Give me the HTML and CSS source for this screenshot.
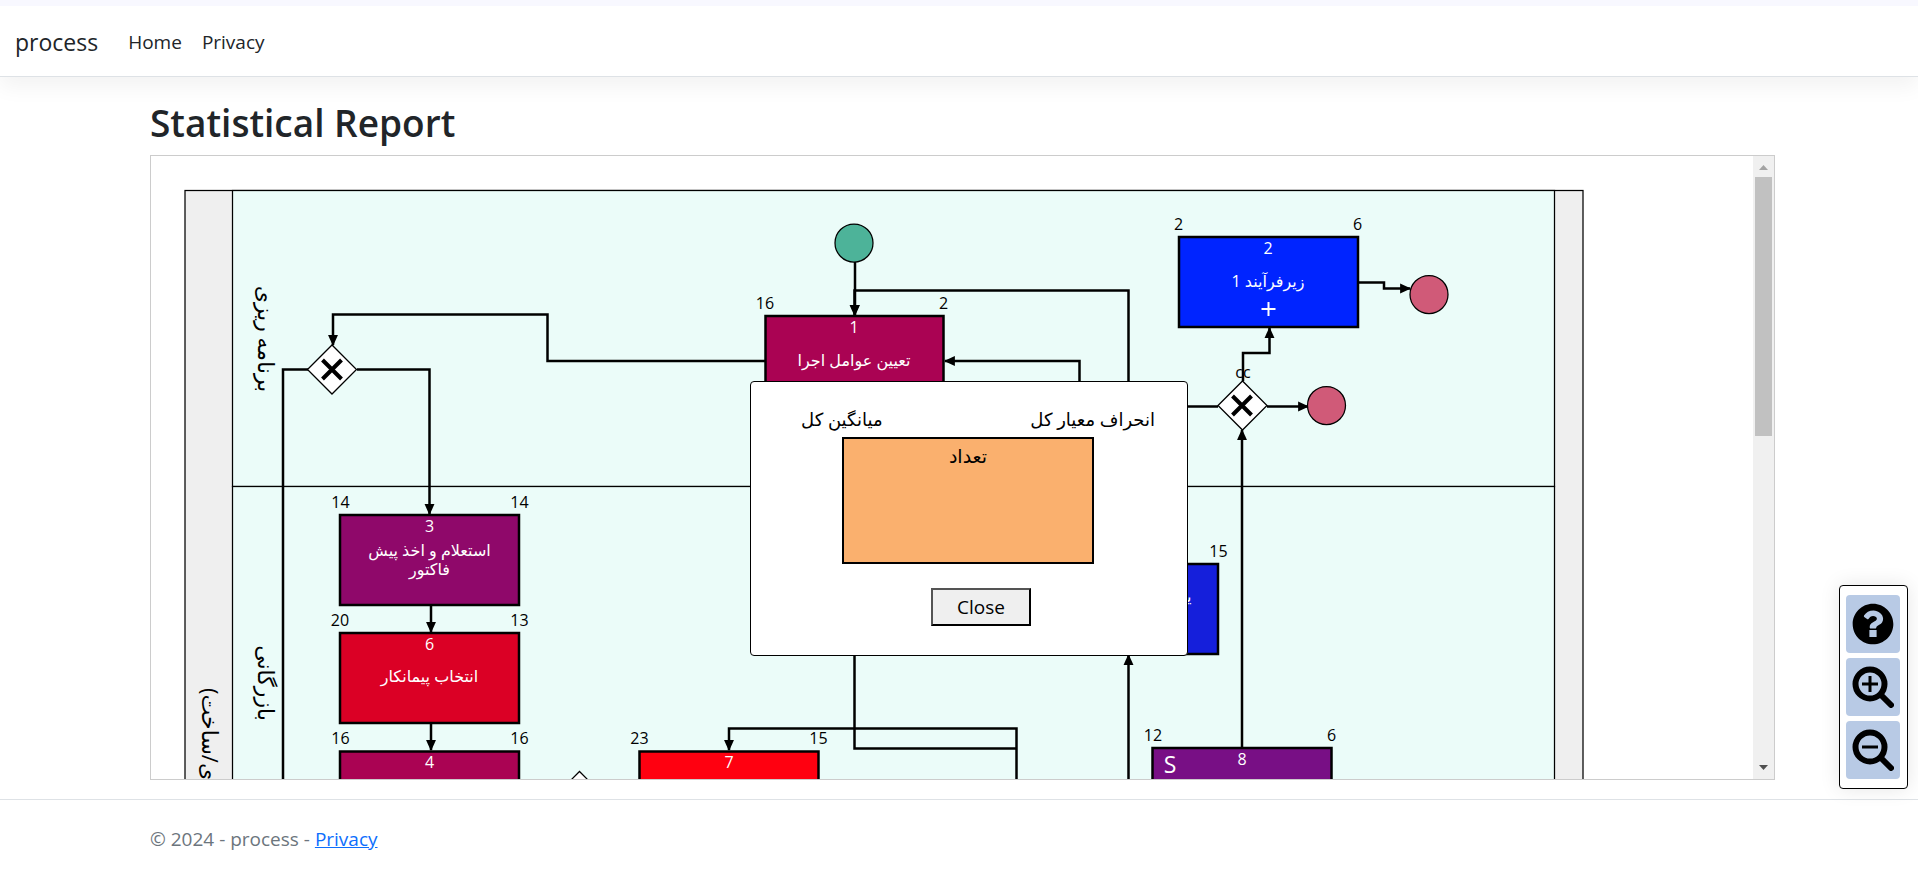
FILE: index.html
```html
<!DOCTYPE html>
<html lang="en">
<head>
<meta charset="utf-8">
<title>process</title>
<link rel="stylesheet" href="styles.css">
</head>
<body>
<header class="topbar">
  <nav class="nav">
    <a class="brand" href="#">process</a>
    <a class="nav-link" href="#">Home</a>
    <a class="nav-link" href="#">Privacy</a>
  </nav>
</header>

<main class="container">
  <h1 class="title">Statistical Report</h1>
  <section class="viewer">
    <svg class="diagram" viewBox="151 156 1602 623" preserveAspectRatio="xMinYMin slice" role="img" aria-label="Process diagram">
      <defs>
        <marker id="arrow" viewBox="0 0 10 10" refX="9" refY="5" markerWidth="11" markerHeight="11" markerUnits="userSpaceOnUse" orient="auto">
          <path d="M0 0.5 L10 5 L0 9.5 Z"/>
        </marker>
      </defs>

      <rect class="pool" x="185" y="190.5" width="1398" height="900"/>
      <rect class="lane" x="232.5" y="190.5" width="1322" height="296"/>
      <rect class="lane" x="232.5" y="486.5" width="1322" height="600"/>

      <text class="lane-name" text-anchor="middle" transform="translate(258 339) rotate(90)">برنامه ریزی</text>
      <text class="lane-name" text-anchor="middle" transform="translate(258 683) rotate(90)">بازرگانی</text>
      <text class="lane-name" text-anchor="end" transform="translate(202 688) rotate(90)">ی/ساخت)</text>

      <g class="flow">
        <path d="M855 262 V315"/>
        <path d="M1128.5 656 V290.5 H854.5 V315"/>
        <path d="M765 361 H547.5 V314.5 H333 V345"/>
        <path class="plain" d="M308 369.5 H283 V790"/>
        <path d="M357 369.5 H429.5 V514"/>
        <path d="M431 606 V632"/>
        <path d="M431 724 V750"/>
        <path d="M1079.5 500 V361 H945"/>
        <path class="plain" d="M1180 406.5 H1218"/>
        <path d="M1267 406.5 H1308"/>
        <path d="M1243 381 V353 H1269.5 V328"/>
        <path d="M1359 282.5 H1384 V288.5 H1410"/>
        <path d="M1242 747 V430"/>
        <path d="M1128.5 790 V655"/>
        <path class="plain" d="M854.5 600 V748.5 H1016.5"/>
        <path d="M1016.5 790 V728.5 H729 V750"/>
      </g>

      <circle class="start" cx="854" cy="243" r="19"/>
      <circle class="end" cx="1326.5" cy="405.5" r="19"/>
      <circle class="end" cx="1429" cy="294.5" r="19"/>

      <g class="gateway">
        <path d="M307.500 369.500 L332 345 L356.500 369.500 L332 394 Z"/>
        <path class="cross" d="M322.500 360 L341.500 379 M341.500 360 L322.500 379"/>
        <path d="M1218 405.500 L1242.500 381 L1267 405.500 L1242.500 430 Z"/>
        <path class="cross" d="M1232.500 396 L1251.500 415 M1251.500 396 L1232.500 415"/>
        <path d="M555 796 L579.500 771.500 L604 796"/>
      </g>
      <text class="gate-name" x="1243" y="378">cc</text>

      <g class="task">
        <rect x="765.500" y="316" width="178" height="90" fill="#aa0353"/>
        <text x="854" y="333">1</text>
        <text x="854" y="366">تعیین عوامل اجرا</text>
        <rect x="1179" y="237" width="179" height="90" fill="#0024ff"/>
        <text x="1268" y="254">2</text>
        <text x="1268" y="287">زیرفرآیند 1</text>
        <path class="plus" d="M1261.500 309 H1275.500 M1268.500 302 V316"/>
        <rect x="340" y="515" width="179" height="90" fill="#8f086a"/>
        <text x="429.500" y="532">3</text>
        <text x="429.500" y="556">استعلام و اخذ پیش</text>
        <text x="429.500" y="575">فاکتور</text>
        <rect x="340" y="633" width="179" height="90" fill="#db0025"/>
        <text x="429.500" y="650">6</text>
        <text x="429.500" y="682">انتخاب پیمانکار</text>
        <rect x="340" y="751.500" width="179" height="90" fill="#aa0353"/>
        <text x="429.500" y="768">4</text>
        <rect x="639.500" y="751.500" width="179" height="90" fill="#ff0010"/>
        <text x="729" y="768">7</text>
        <rect x="1039" y="564" width="179" height="90" fill="#151fdb"/>
        <text x="1182" y="602">یک</text>
        <rect x="1152.500" y="748" width="179" height="90" fill="#780f85"/>
        <text class="kind" x="1170" y="773">S</text>
        <text x="1242" y="765">8</text>
      </g>

      <g class="stat">
        <text x="765" y="309">16</text><text x="943.500" y="309">2</text>
        <text x="1178.500" y="230">2</text><text x="1357.500" y="230">6</text>
        <text x="340.500" y="508">14</text><text x="519.500" y="508">14</text>
        <text x="340" y="626">20</text><text x="519.500" y="626">13</text>
        <text x="340.500" y="744">16</text><text x="519.500" y="744">16</text>
        <text x="639.500" y="744">23</text><text x="818.500" y="744">15</text>
        <text x="1218.500" y="557">15</text>
        <text x="1153" y="741">12</text><text x="1331.500" y="741">6</text>
      </g>
    </svg>

    <div class="scrollbar">
      <svg class="scroll-arrow" viewBox="0 0 9 5"><path fill="#a3a3a3" d="M0 5 L4.500 0 L9 5 Z"/></svg>
      <div class="thumb"></div>
      <svg class="scroll-arrow last" viewBox="0 0 9 5"><path fill="#505050" d="M0 0 L4.500 5 L9 0 Z"/></svg>
    </div>

    <div class="legend" role="dialog" aria-label="Legend">
      <div class="legend-labels" dir="rtl">
        <span>انحراف معیار کل</span>
        <span>میانگین کل</span>
      </div>
      <div class="legend-box" dir="rtl">تعداد</div>
      <button class="close" type="button">Close</button>
    </div>
  </section>
</main>

<footer class="footer">
  <div class="container">© 2024 - process - <a href="#">Privacy</a></div>
</footer>

<div class="tools">
  <button class="tool" type="button" aria-label="Help">
    <svg viewBox="0 0 512 512"><path d="M504 256c0 137-111 248-248 248S8 393 8 256 119 8 256 8s248 111 248 248zM262.700 90c-54.500 0-89.300 23-116.500 63.800-3.500 5.300-2.400 12.400 2.700 16.300l34.700 26.300c5.200 3.900 12.600 3 16.700-2.100 17.900-22.700 30.100-35.800 57.300-35.800 20.400 0 45.700 13.100 45.700 33 0 15-12.400 22.700-32.500 34C247.100 238.500 216 254.900 216 296v4c0 6.600 5.400 12 12 12h56c6.600 0 12-5.400 12-12v-1.300c0-28.500 83.200-29.600 83.200-106.700 0-58-60.200-102-116.500-102zM212 328v86h88v-86z" fill-rule="evenodd"/></svg>
  </button>
  <button class="tool" type="button" aria-label="Zoom in">
    <svg viewBox="0 0 42 42" fill="none" stroke="#000"><circle cx="18" cy="18" r="14.500" stroke-width="6"/><path d="M29 29 L39 39" stroke-width="6" stroke-linecap="round"/><path d="M10 18 H26 M18 10 V26" stroke-width="3"/></svg>
  </button>
  <button class="tool" type="button" aria-label="Zoom out">
    <svg viewBox="0 0 42 42" fill="none" stroke="#000"><circle cx="18" cy="18" r="14.500" stroke-width="6"/><path d="M29 29 L39 39" stroke-width="6" stroke-linecap="round"/><path d="M10 18 H26" stroke-width="3"/></svg>
  </button>
</div>
</body>
</html>
```
FILE: styles.css
```css
* { box-sizing: border-box; }

body {
  margin: 0;
  border-top: 6px solid #f8f8ff;
  background: #fff;
  color: #212529;
  font-family: "Open Sans", "Noto Sans", "DejaVu Sans", sans-serif;
  font-size: 19px;
  line-height: 30px;
}

.topbar {
  border-bottom: 1px solid #dee2e6;
  box-shadow: 0 10px 20px rgba(0, 0, 0, 0.05);
  padding: 21px 15px 19px;
}

.nav { display: flex; align-items: center; gap: 20px; }
.nav a { color: #212529; text-decoration: none; }
.nav .brand { font-size: 23px; margin-right: 10px; }

.container { max-width: 1618px; margin: 0 auto; }

.title {
  margin: 0 0 8px;
  padding-top: 22px;
  font-size: 37px;
  font-weight: 600;
  line-height: 48px;
}

.viewer {
  position: relative;
  display: flex;
  height: 625px;
  margin-right: -7px;
  border: 1px solid #ccc;
}

.diagram { flex: 1; min-width: 0; height: 100%; }

.pool { fill: #efefef; stroke: #000; stroke-width: 1.25; }
.lane { fill: #ebfcf9; stroke: #000; stroke-width: 1.25; }
.lane-name { font-size: 22px; direction: rtl; }
.flow { fill: none; stroke: #000; stroke-width: 2.5; }
.flow path { marker-end: url(#arrow); }
.flow .plain { marker-end: none; }
.start { fill: #4db399; stroke: #000; stroke-width: 1.25; }
.end { fill: #d05a78; stroke: #000; stroke-width: 1.25; }
.gateway { fill: #fff; stroke: #000; stroke-width: 1.25; }
.gateway .cross { stroke-width: 4; }
.gate-name { font-size: 16px; text-anchor: middle; }
.task { font-size: 16px; fill: #fff; text-anchor: middle; }
.task rect { stroke: #000; stroke-width: 2.5; }
.task .plus { stroke: #fff; stroke-width: 2; }
.task .kind { font-size: 23px; }
.stat { font-size: 16px; fill: #000; text-anchor: middle; }

.scrollbar {
  display: flex;
  flex-direction: column;
  align-items: center;
  width: 21px;
  background: #f0f0f0;
}
.scroll-arrow { width: 9px; height: 5px; margin: 9px 0 7px; }
.scroll-arrow.last { margin: auto 0 9px; }
.thumb { width: 17px; height: 259px; background: #c1c1c1; }

.legend {
  position: absolute;
  top: 225px;
  left: 599px;
  width: 438px;
  height: 275px;
  padding: 19px 32px;
  border: 1px solid #000;
  border-radius: 4px;
  background: #fff;
  color: #000;
}
.legend-labels {
  display: flex;
  justify-content: space-between;
  padding-left: 18px;
  font-size: 18px;
  line-height: 36px;
}
.legend-box {
  width: 252px;
  height: 127px;
  margin: 0 59px;
  border: 2px solid #000;
  background: #fab06e;
  line-height: 34px;
  text-align: center;
}
.close {
  display: block;
  width: 100px;
  height: 38px;
  margin: 24px 0 0 148px;
  border: 2px outset #000;
  background: #efefef;
  color: #000;
  font: inherit;
}

.footer {
  margin-top: 19px;
  border-top: 1px solid #dee2e6;
  padding: 24px 0;
  color: #6c757d;
}
.footer a { color: #0d6efd; }

.tools {
  position: fixed;
  right: 10px;
  bottom: 84px;
  display: flex;
  flex-direction: column;
  gap: 5px;
  padding: 9px 7px 9px 6px;
  border: 1px solid #000;
  border-radius: 4px;
  background: #fff;
  box-shadow: 0 0 20px rgba(0, 0, 0, 0.1);
}
.tool {
  display: grid;
  place-items: center;
  width: 54px;
  height: 58px;
  padding: 0;
  border: 0;
  border-radius: 4px;
  background: #b8cae5;
}
.tool svg { width: 42px; height: 42px; }
```
